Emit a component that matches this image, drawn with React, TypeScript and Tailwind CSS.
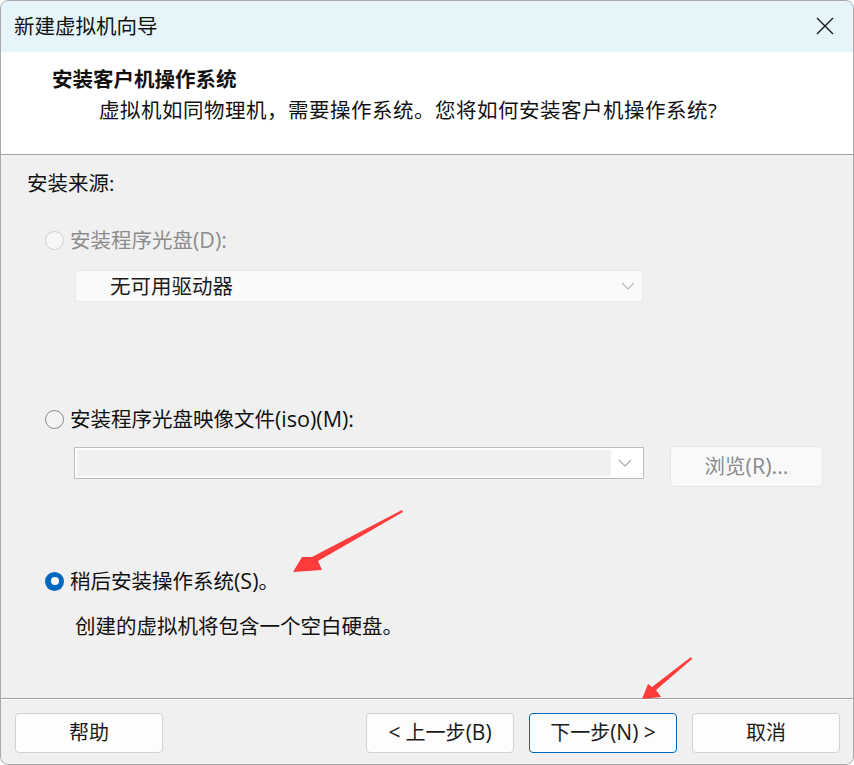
import React from "react";

const FONT = "'Open Sans','Noto Sans CJK SC','Noto Sans',sans-serif";

function Chevron({ color }: { color: string }) {
  return (
    <svg width="14" height="8" viewBox="0 0 14 8" fill="none">
      <path d="M1 1 L7 7 L13 1" stroke={color} strokeWidth="1.2" />
    </svg>
  );
}

function Radio({ state }: { state: "disabled" | "off" | "on" }) {
  if (state === "on") {
    return (
      <span className="flex h-[19px] w-[19px] items-center justify-center rounded-full bg-[#0067c0]">
        <span className="h-[8px] w-[8px] rounded-full bg-white" />
      </span>
    );
  }
  return (
    <span
      className={
        state === "disabled"
          ? "block h-[19px] w-[19px] rounded-full border border-[#cfcfcf] bg-[#f7f7f7]"
          : "block h-[19px] w-[19px] rounded-full border border-[#8a8a8a] bg-[#f4f4f4]"
      }
    />
  );
}

function Btn({ children, primary }: { children: React.ReactNode; primary?: boolean }) {
  return (
    <div
      className={
        "flex h-[40px] w-[148px] items-center justify-center rounded-[4px] bg-[#fdfdfd] text-[20px] text-[#1a1a1a] " +
        (primary ? "border border-[#0067c0]" : "border border-[#d2d2d2]")
      }
    >
      {children}
    </div>
  );
}

export default function App() {
  return (
    <div
      className="relative flex h-[765px] w-[854px] flex-col overflow-hidden rounded-[8px] bg-[#f0f0f0] text-black"
      style={{ fontFamily: FONT }}
    >
      {/* title bar */}
      <div className="flex h-[52px] shrink-0 items-center justify-between bg-[#e5f5f9] pl-[14px] pr-[18px]">
        <span className="text-[20.5px] leading-[28px] text-[#111]">新建虚拟机向导</span>
        <svg width="18" height="18" viewBox="0 0 18 18" className="mr-[2px]">
          <path d="M1 1 L17 17 M17 1 L1 17" stroke="#1a1a1a" strokeWidth="1.4" />
        </svg>
      </div>

      {/* header */}
      <div className="h-[103px] shrink-0 border-b border-[#a0a0a0] bg-white">
        <div className="ml-[52px] mt-[13px] text-[20.5px] font-bold leading-[28px] text-[#111]">
          安装客户机操作系统
        </div>
        <div className="ml-[99px] mt-[3px] text-[20.5px] leading-[28px] tracking-[0.5px] text-[#111]">
          虚拟机如同物理机，需要操作系统。您将如何安装客户机操作系统?
        </div>
      </div>

      {/* body */}
      <div className="flex flex-1 flex-col pl-[27px] pt-[14px]">
        <div className="text-[20.5px] leading-[28px] text-[#111]">安装来源:</div>

        <div className="ml-[18px] mt-[29px] flex h-[28px] items-center gap-[6px]">
          <Radio state="disabled" />
          <span className="text-[20.5px] leading-[28px] text-[#8c8c8c]">
            安装程序光盘<span className="text-[21.5px]">(D):</span>
          </span>
        </div>

        <div className="ml-[48px] mt-[16px] flex h-[32px] w-[568px] items-center justify-between border border-[#e9e9e9] bg-[#fafafa] pl-[34px] pr-[7px]">
          <span className="text-[20.5px] leading-[28px] text-[#1a1a1a]">无可用驱动器</span>
          <Chevron color="#b8b8b8" />
        </div>

        <div className="ml-[18px] mt-[103px] flex h-[28px] items-center gap-[6px]">
          <Radio state="off" />
          <span className="text-[20.5px] leading-[28px] text-[#111]">
            安装程序光盘映像文件<span className="text-[21.5px]">(iso)(M):</span>
          </span>
        </div>

        <div className="mt-[13px] flex items-start">
          <div className="ml-[47px] mt-[1px] flex h-[32px] w-[570px] items-center border border-[#bdbdbd] bg-white p-[2px]">
            <div className="h-full w-[534px] bg-[#f0f0f0]" />
            <div className="flex flex-1 items-center justify-center pr-[2px]">
              <Chevron color="#a8a8a8" />
            </div>
          </div>
          <div className="ml-[26px] flex h-[41px] w-[153px] items-center justify-center rounded-[4px] border border-[#e6e6e6] bg-[#f9f9f9] text-[20.5px] text-[#8a8a8a]">
            浏览<span className="text-[21.5px]">(R)...</span>
          </div>
        </div>

        <div className="ml-[18px] mt-[80px] flex h-[28px] items-center gap-[6px]">
          <Radio state="on" />
          <span className="text-[20.5px] leading-[28px] text-[#111]">
            稍后安装操作系统<span className="text-[21.5px]">(S)</span>。
          </span>
        </div>

        <div className="ml-[48px] mt-[17px] text-[20.5px] leading-[28px] text-[#111]">
          创建的虚拟机将包含一个空白硬盘。
        </div>
      </div>

      {/* footer */}
      <div className="h-[67px] shrink-0 border-t border-[#a0a0a0]">
        <div className="h-px bg-white" />
        <div className="flex items-center justify-between pl-[15px] pr-[14px] pt-[13px]">
          <Btn>帮助</Btn>
          <div className="flex gap-[15px]">
            <Btn>
              <span className="text-[21px]">&lt;</span>&nbsp;上一步<span className="text-[21px]">(B)</span>
            </Btn>
            <Btn primary>
              下一步<span className="text-[21px]">(N) &gt;</span>
            </Btn>
            <Btn>取消</Btn>
          </div>
        </div>
      </div>

      {/* annotation arrows */}
      <svg className="pointer-events-none absolute left-0 top-0" width="854" height="765">
        <polygon points="402,510 403,512 318,561 322,570 293,572 302,557 312,557" fill="#ff3b3b" />
        <polygon points="691,657 692,659 656,690 661,697 642,699 648,684 652,687" fill="#ff3b3b" />
      </svg>

      {/* window border */}
      <div className="pointer-events-none absolute inset-0 rounded-[8px] border border-[#a8a8a8]" />
    </div>
  );
}
